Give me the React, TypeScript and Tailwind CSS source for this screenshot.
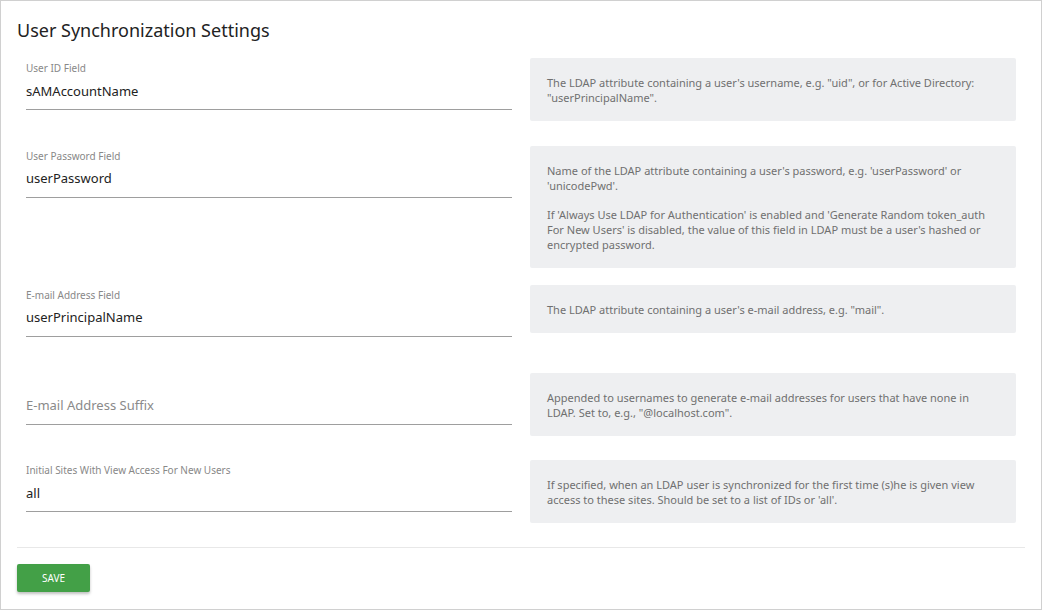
import React from 'react';

const FIELDS = [
  {
    label: 'User ID Field',
    value: 'sAMAccountName',
    help: ['The LDAP attribute containing a user\'s username, e.g. "uid", or for Active Directory: "userPrincipalName".'],
  },
  {
    label: 'User Password Field',
    value: 'userPassword',
    help: [
      "Name of the LDAP attribute containing a user's password, e.g. 'userPassword' or 'unicodePwd'.",
      "If 'Always Use LDAP for Authentication' is enabled and 'Generate Random token_auth For New Users' is disabled, the value of this field in LDAP must be a user's hashed or encrypted password.",
    ],
  },
  {
    label: 'E-mail Address Field',
    value: 'userPrincipalName',
    help: ['The LDAP attribute containing a user\'s e-mail address, e.g. "mail".'],
  },
  {
    label: '',
    value: '',
    placeholder: 'E-mail Address Suffix',
    help: ['Appended to usernames to generate e-mail addresses for users that have none in LDAP. Set to, e.g., "@localhost.com".'],
  },
  {
    label: 'Initial Sites With View Access For New Users',
    value: 'all',
    help: ["If specified, when an LDAP user is synchronized for the first time (s)he is given view access to these sites. Should be set to a list of IDs or 'all'."],
  },
];

export default function App() {
  return (
    <div className="w-[1042px] h-[610px] bg-white font-['Noto_Sans',sans-serif]">
      <div className="h-full border border-[#d0d0d0] px-4 pt-4 pb-4">
        <h2 className="text-[18px] leading-[26px] text-[#222] mb-[15px]">User Synchronization Settings</h2>

        <div>
          {FIELDS.map((f, i) => (
            <div key={i} className="flex items-start">
              {/* input */}
              <div className="w-1/2 px-[9px] min-h-[87.8px] pt-[3px]">
                <div className="text-[10px] leading-[14px] text-[#888] h-[14px] whitespace-nowrap">{f.label}</div>
                <input
                  type="text"
                  readOnly
                  value={f.value}
                  placeholder={f.placeholder}
                  className="block w-full h-[35px] pb-[3px] border-b border-[#9e9e9e] text-[13px] text-[#222] placeholder:text-[#8a8a8a] outline-none bg-transparent"
                />
              </div>

              {/* help */}
              <div className="w-1/2 px-[9px]">
                <div className="bg-[#eeeff1] rounded-[2px] pl-[17px] pr-[20px] pt-[17px] pb-[16px] mb-[17px] text-[11px] leading-[15px] text-[#707070]">
                  {f.help.map((p, j) => (
                    <p key={j} className={j > 0 ? 'mt-[14px]' : ''}>{p}</p>
                  ))}
                </div>
              </div>
            </div>
          ))}
        </div>

        <div className="border-t border-[#e8e8e8] -mt-px" />

        <button className="mt-4 w-[73px] h-[28px] bg-[#43a047] text-white text-[10px] uppercase rounded-[2px] shadow-[0_2px_3px_rgba(0,0,0,0.25)]">
          Save
        </button>
      </div>
    </div>
  );
}
